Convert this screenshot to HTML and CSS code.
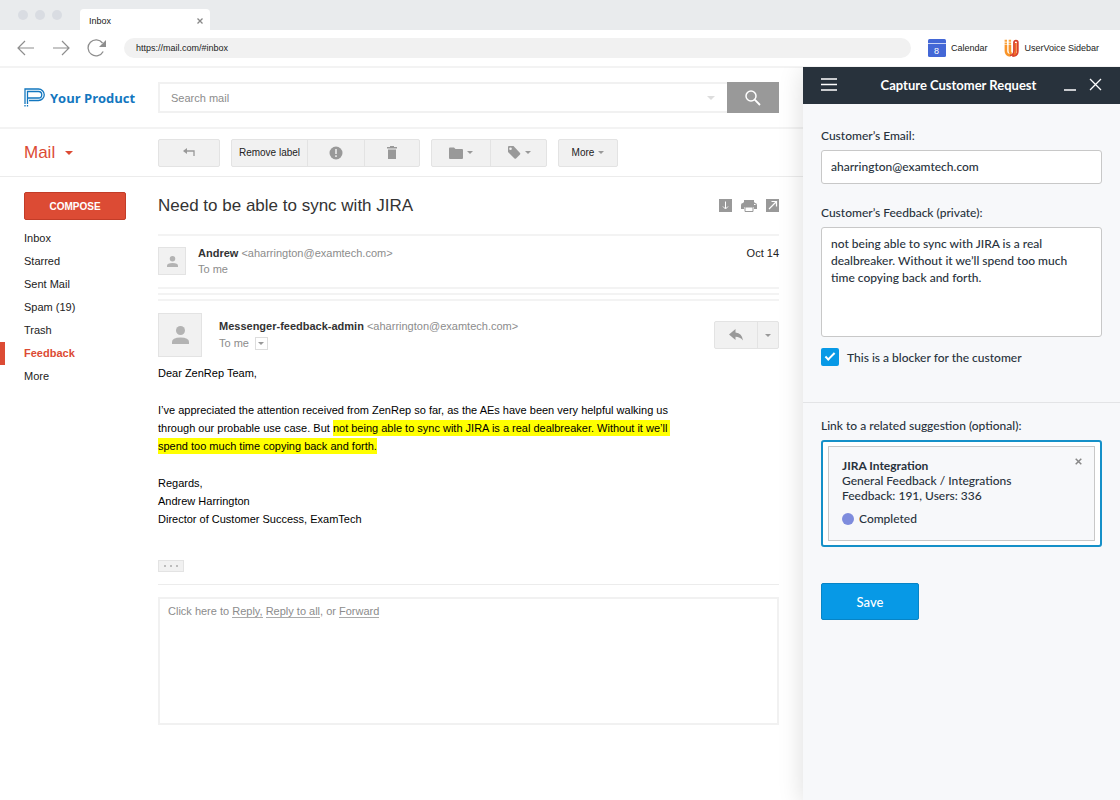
FILE: index.html
```html
<!DOCTYPE html>
<html lang="en">
<head>
    <meta charset="UTF-8">
    <meta name="viewport" content="width=device-width, initial-scale=1.0">
    <title>Inbox</title>
    <link rel="stylesheet" href="styles.css">
</head>
<body>
    <header class="browser">
        <div class="tabs">
            <span class="dot"></span>
            <span class="dot"></span>
            <span class="dot"></span>
            <div class="tab">
                <span>Inbox</span>
                <button class="tab-close" aria-label="Close tab">
                    <svg width="6" height="6" viewBox="0 0 6 6"><path d="M.5.5l5 5M5.5.5l-5 5" stroke="#888" stroke-width="1.3"/></svg>
                </button>
            </div>
        </div>
        <div class="address-bar">
            <button aria-label="Back">
                <svg width="18" height="16" viewBox="0 0 18 16" fill="none" stroke="#8e8e8e" stroke-width="1.2"><path d="M17 8H1M8 1L1 8l7 7"/></svg>
            </button>
            <button aria-label="Forward">
                <svg width="18" height="16" viewBox="0 0 18 16" fill="none" stroke="#8e8e8e" stroke-width="1.2"><path d="M1 8h16M10 1l7 7-7 7"/></svg>
            </button>
            <button aria-label="Reload">
                <svg width="20" height="18" viewBox="0 0 20 18"><path d="M16.2 12.5A8 8 0 1 1 15.5 4" fill="none" stroke="#8e8e8e" stroke-width="1.3"/><path d="M19 1v7h-7z" fill="#8e8e8e"/></svg>
            </button>
            <input type="text" class="url" aria-label="Address" value="https://mail.com/#inbox">
            <a href="#" class="bookmark">
                <svg width="18" height="18" viewBox="0 0 18 18"><rect width="18" height="18" rx="1.5" fill="#4367d6"/><path d="M0 4.5h18" stroke="#c9d4f5"/><text x="8.5" y="14.5" font-size="9" fill="#fff" text-anchor="middle">8</text></svg>
                Calendar
            </a>
            <a href="#" class="bookmark">
                <svg width="15" height="18" viewBox="0 0 15 18" fill="none">
                    <path d="M1.9 6v6q0 4 4.600 4.500" stroke="#f9952a" stroke-width="2.600"/>
                    <path d="M5.900 6v6q0 2 1.500 3" stroke="#f9952a" stroke-width="2.600"/>
                    <path d="M6 16.300c3 0 4-1.800 4-4.300V3.500a1.900 1.900 0 0 1 3.800 0V12c0 3-2 5-5.500 5" stroke="#d9402b" stroke-width="1.800"/>
                    <path d="M11.800 4v8q0 2.500-2 4" stroke="#f26a21" stroke-width="1.800"/>
                    <path d="M.6 1.800h2.400M4.700 1.800h2.400M.6 4.500h2.400M4.700 4.500h2.400" stroke="#f9a13a" stroke-width="1.900"/>
                </svg>
                UserVoice Sidebar
            </a>
        </div>
    </header>

    <div class="app">
        <div class="mail">
            <div class="mail-header">
                <a href="#" class="brand">
                    <svg width="21" height="19" viewBox="0 0 21 19" fill="none" stroke="#1377bf" stroke-width="1.3"><path d="M1 16V1h13.500a5.500 5.500 0 0 1 0 11.500H5M3.500 16V3.500h11a3.200 3.200 0 0 1 0 6.500H3.500M3.500 10v2.500M1 17v1.500M3.500 17v1.500"/></svg>
                    Your Product
                </a>
                <form class="search">
                    <div class="search-box">
                        <input type="text" placeholder="Search mail" aria-label="Search mail">
                        <span class="caret light"></span>
                    </div>
                    <button type="button" aria-label="Search">
                        <svg width="16" height="16" viewBox="0 0 16 16" fill="none" stroke="#fff"><circle cx="6" cy="6" r="5" stroke-width="1.5"/><path d="M9.700 9.700L15 15" stroke-width="1.8"/></svg>
                    </button>
                </form>
            </div>

            <div class="toolbar">
                <button class="mail-menu">Mail <span class="caret red"></span></button>
                <div class="tools">
                    <div class="group">
                        <button class="back" aria-label="Back to inbox">
                            <svg width="12" height="9" viewBox="0 0 12 9"><path d="M2 3h9v5" fill="none" stroke="#999" stroke-width="1.3"/><path d="M0 3l4-3v6z" fill="#999"/></svg>
                        </button>
                    </div>
                    <div class="group">
                        <button class="remove">Remove label</button>
                        <button class="spam" aria-label="Report spam">
                            <svg width="14" height="14" viewBox="0 0 14 14"><circle cx="7" cy="7" r="6.5" fill="#999"/><path d="M7 3v5M7 9.300v1.700" stroke="#f1f1f1" stroke-width="1.5"/></svg>
                        </button>
                        <button class="trash" aria-label="Delete">
                            <svg width="10" height="13" viewBox="0 0 10 13" fill="#999"><path d="M0 1h3V0h4v1h3v1.500H0zM1 3.500h8V13H1z"/></svg>
                        </button>
                    </div>
                    <div class="group">
                        <button class="folder" aria-label="Move to">
                            <svg width="14" height="12" viewBox="0 0 14 12" fill="#999"><path d="M0 1.500Q0 .5 1 .5h4L6.500 2H13q1 0 1 1v8q0 1-1 1H1q-1 0-1-1z"/></svg>
                            <span class="caret"></span>
                        </button>
                        <button class="label" aria-label="Labels">
                            <svg width="14" height="13" viewBox="0 0 14 13"><path d="M1 1q0-1 1-1h4.500L13 7q.7.8 0 1.500L9 12.500q-.7.7-1.500 0L1 6z" fill="#999"/><circle cx="3.500" cy="2.700" r="1.300" fill="#f1f1f1"/></svg>
                            <span class="caret"></span>
                        </button>
                    </div>
                    <div class="group">
                        <button class="more">More <span class="caret"></span></button>
                    </div>
                </div>
            </div>

            <div class="mail-body">
                <nav class="folders">
                    <button class="compose">COMPOSE</button>
                    <ul>
                        <li><a href="#">Inbox</a></li>
                        <li><a href="#">Starred</a></li>
                        <li><a href="#">Sent Mail</a></li>
                        <li><a href="#">Spam (19)</a></li>
                        <li><a href="#">Trash</a></li>
                        <li class="active"><a href="#">Feedback</a></li>
                        <li><a href="#">More</a></li>
                    </ul>
                </nav>

                <main class="thread">
                    <div class="subject">
                        <h1>Need to be able to sync with JIRA</h1>
                        <div class="actions">
                            <button aria-label="Download">
                                <svg width="13" height="13" viewBox="0 0 13 13"><path d="M0 0h13v13H0z" fill="#999"/><path d="M6.500 2.500v7M4 7.500l2.500 2.500L9 7.500" fill="none" stroke="#fff"/></svg>
                            </button>
                            <button aria-label="Print">
                                <svg width="16" height="13" viewBox="0 0 16 13"><path d="M3 1h10v2H3zM2 4h12q2 0 2 2v4h-3V8H3v2H0V6q0-2 2-2z" fill="#999"/><path d="M2.500 3h11v5h-11z" fill="#999"/><path d="M4 8h8v4.500H4z" fill="#fff" stroke="#999"/><path d="M13 5.500h1.500" stroke="#fff"/></svg>
                            </button>
                            <button aria-label="Open in new window">
                                <svg width="13" height="13" viewBox="0 0 13 13"><path d="M0 0h13v13H0z" fill="#999"/><path d="M3 10l7-7M5.500 2.500h5v5" fill="none" stroke="#fff" stroke-width="1.2"/></svg>
                            </button>
                        </div>
                    </div>

                    <div class="message">
                        <div class="avatar small">
                            <svg width="11" height="11" viewBox="0 0 16 16" fill="#b3b3b3"><circle cx="8" cy="4" r="4"/><path d="M0 16v-2q0-4 8-4t8 4v2z"/></svg>
                        </div>
                        <div class="from">
                            <div><b>Andrew</b> &lt;aharrington@examtech.com&gt;</div>
                            <div>To me</div>
                        </div>
                        <time>Oct 14</time>
                    </div>
                    <div class="collapsed"></div>
                    <div class="collapsed"></div>

                    <div class="message open">
                        <div class="avatar">
                            <svg width="17" height="18" viewBox="0 0 17 18" fill="#b3b3b3"><circle cx="8.500" cy="4.500" r="4.500"/><path d="M0 18v-2q0-4.500 8.500-4.500T17 16v2z"/></svg>
                        </div>
                        <div class="from">
                            <div><b>Messenger-feedback-admin</b> &lt;aharrington@examtech.com&gt;</div>
                            <div class="to">To me <button class="details" aria-label="Show details"><span class="caret"></span></button></div>
                        </div>
                        <div class="group">
                            <button class="reply" aria-label="Reply">
                                <svg width="14" height="12" viewBox="0 0 14 12"><path d="M0 5.500L6.500 0v3.500Q13 4 14 11.500 11 7.800 6.500 7.800V11z" fill="#999"/></svg>
                            </button>
                            <button class="reply-more" aria-label="More reply options"><span class="caret"></span></button>
                        </div>
                    </div>

                    <div class="text">
                        <p>Dear ZenRep Team,</p>
                        <p>I’ve appreciated the attention received from ZenRep so far, as the AEs have been very helpful walking us<br>
                        through our probable use case. But <mark>not being able to sync with JIRA is a real dealbreaker. Without it we’ll&nbsp;<br>
                        spend too much time copying back and forth.</mark></p>
                        <p>Regards,<br>Andrew Harrington<br>Director of Customer Success, ExamTech</p>
                    </div>
                    <button class="trimmed" aria-label="Show trimmed content">
                        <svg width="14" height="2" viewBox="0 0 14 2" fill="#aaa"><circle cx="1" cy="1" r="1"/><circle cx="7" cy="1" r="1"/><circle cx="13" cy="1" r="1"/></svg>
                    </button>

                    <div class="reply-area">
                        <div class="reply-box">Click here to <a href="#">Reply,</a> <a href="#">Reply to all</a>, or <a href="#">Forward</a></div>
                    </div>
                </main>
            </div>
        </div>

        <aside class="sidebar">
            <div class="sidebar-header">
                <button aria-label="Menu">
                    <svg width="16" height="13" viewBox="0 0 16 13" stroke="#fff" stroke-width="1.5"><path d="M0 1h16M0 6.500h16M0 12h16"/></svg>
                </button>
                <h2>Capture Customer Request</h2>
                <button aria-label="Minimize">
                    <svg width="12" height="12" viewBox="0 0 12 12"><path d="M0 11h12" stroke="#fff" stroke-width="1.5"/></svg>
                </button>
                <button aria-label="Close">
                    <svg width="13" height="13" viewBox="0 0 13 13" stroke="#fff" stroke-width="1.3"><path d="M1 1l11 11M12 1L1 12"/></svg>
                </button>
            </div>
            <form class="request">
                <div class="field">
                    <label for="email">Customer’s Email:</label>
                    <input type="text" id="email" value="aharrington@examtech.com">
                </div>
                <div class="field">
                    <label for="feedback">Customer’s Feedback (private):</label>
                    <textarea id="feedback">not being able to sync with JIRA is a real dealbreaker. Without it we’ll spend too much time copying back and forth.</textarea>
                </div>
                <div class="check">
                    <input type="checkbox" id="blocker" checked>
                    <label for="blocker">This is a blocker for the customer</label>
                </div>
            </form>
            <div class="related">
                <div class="title">Link to a related suggestion (optional):</div>
                <div class="suggestion-box">
                    <div class="suggestion">
                        <div class="info">
                            <b>JIRA Integration</b>
                            <div>General Feedback / Integrations</div>
                            <div>Feedback: 191, Users: 336</div>
                            <div class="status"><span class="status-dot"></span>Completed</div>
                        </div>
                        <button class="remove-link" aria-label="Remove suggestion">
                            <svg width="7" height="7" viewBox="0 0 7 7"><path d="M.7.7l5.600 5.600M6.300.7L.7 6.300" stroke="#888" stroke-width="1.5"/></svg>
                        </button>
                    </div>
                </div>
                <button class="save">Save</button>
            </div>
        </aside>
    </div>
</body>
</html>
```
FILE: styles.css
```css
* {
    box-sizing: border-box;
}
body {
    margin: 0;
    min-height: 100vh;
    display: flex;
    flex-direction: column;
    font-family: "Liberation Sans", Arial, sans-serif;
    font-size: 11px;
    color: #222;
    background: #fff;
}
button {
    padding: 0;
    border: none;
    background: none;
    font: inherit;
    color: inherit;
    cursor: pointer;
    display: flex;
    align-items: center;
    justify-content: center;
}
input, textarea {
    font: inherit;
    color: inherit;
    outline: none;
}
a {
    color: inherit;
    text-decoration: none;
}
svg {
    display: block;
    flex-shrink: 0;
}
h1, h2, p, ul {
    margin: 0;
    padding: 0;
    font-weight: normal;
}

/* Browser */
.browser {
    font-size: 9px;
}
.tabs {
    height: 30px;
    padding-left: 18px;
    display: flex;
    align-items: center;
    gap: 7px;
    background: #e9ebed;
}
.dot {
    width: 10px;
    height: 10px;
    border-radius: 50%;
    background: #d9dce2;
}
.tab {
    align-self: flex-end;
    width: 130px;
    height: 21px;
    margin-left: 11px;
    padding: 2px 7px 0 9px;
    display: flex;
    align-items: center;
    justify-content: space-between;
    background: #fff;
    border-radius: 4px 4px 0 0;
}
.address-bar {
    height: 38px;
    padding: 0 21px 0 17px;
    display: flex;
    align-items: center;
    gap: 17px;
    border-bottom: 2px solid #f3f3f3;
}
.url {
    flex: 1;
    min-width: 0;
    height: 20px;
    padding: 0 12px;
    border: none;
    border-radius: 10px;
    background: #f1f1f1;
}
.bookmark {
    display: flex;
    align-items: center;
    gap: 5px;
}

.app {
    flex: 1;
    display: flex;
}
.caret {
    border: 4px solid transparent;
    border-top-color: #999;
    border-bottom: 0;
}
.caret.light {
    border-top-color: #ddd;
}
.caret.red {
    border-top-color: #dc4b34;
}

/* Mail */
.mail {
    flex: 1;
    min-width: 0;
}
.mail-header, .toolbar {
    display: grid;
    grid-template-columns: 134px 1fr;
    align-items: center;
    padding: 0 24px;
}
.mail-header {
    height: 61px;
    border-bottom: 2px solid #f3f3f3;
}
.brand {
    display: flex;
    align-items: center;
    gap: 5px;
    font: bold 13px "Open Sans", sans-serif;
    color: #1377bf;
    white-space: nowrap;
}
.search {
    display: flex;
    height: 31px;
}
.search-box {
    flex: 1;
    display: flex;
    align-items: center;
    padding-right: 12px;
    border: 2px solid #f1f1f1;
    border-right: none;
}
.search input {
    flex: 1;
    min-width: 0;
    padding: 0 11px;
    border: none;
}
.search input::placeholder {
    color: #8c8c8c;
}
.search button {
    width: 52px;
    background: #999;
}
.toolbar {
    height: 48px;
    border-bottom: 1px solid #ececec;
}
.mail-menu {
    justify-content: flex-start;
    gap: 10px;
    font-size: 17px;
    color: #dc4b34;
}
.tools {
    display: flex;
    gap: 11px;
    font-size: 10px;
}
.group {
    display: flex;
    height: 28px;
    border: 1px solid #e3e3e3;
    border-radius: 2px;
    background: #f1f1f1;
}
.group button {
    gap: 4px;
}
.group button + button {
    border-left: 1px solid #e3e3e3;
}
.group .caret, .details .caret {
    border-width: 3px 3px 0;
}
.back { width: 60px; }
.remove { width: 75px; }
.spam { width: 57px; }
.trash { width: 55px; }
.folder { width: 58px; }
.label { width: 56px; }
.more { width: 58px; }

.mail-body {
    display: grid;
    grid-template-columns: 158px 1fr;
    padding-right: 24px;
}
.folders {
    padding-top: 15px;
}
.compose {
    width: 102px;
    height: 28px;
    margin-left: 24px;
    border: 1px solid #c23c28;
    border-radius: 2px;
    background: #dc4b34;
    color: #fff;
    font-weight: bold;
    font-size: 10px;
}
.folders ul {
    margin-top: 7px;
    list-style: none;
    line-height: 23px;
}
.folders li {
    padding-left: 24px;
}
.folders .active {
    padding-left: 19px;
    border-left: 5px solid #dc4b34;
    color: #dc4b34;
    font-weight: bold;
}
.subject {
    height: 59px;
    display: flex;
    align-items: center;
    justify-content: space-between;
    border-bottom: 2px solid #f3f3f3;
}
.subject h1 {
    font-size: 17px;
    color: #333;
}
.actions {
    display: flex;
    gap: 9px;
}
.message {
    display: flex;
    height: 53px;
    padding-top: 11px;
    gap: 12px;
    border-bottom: 2px solid #f3f3f3;
}
.avatar {
    width: 44px;
    height: 44px;
    display: flex;
    align-items: center;
    justify-content: center;
    border: 1px solid #e3e3e3;
    background: #f1f1f1;
}
.avatar.small {
    width: 28px;
    height: 28px;
}
.from {
    flex: 1;
    line-height: 16px;
    margin-top: -2px;
    color: #8c8c8c;
}
.from b {
    color: #333;
}
.message time {
    line-height: 12px;
}
.collapsed {
    height: 6px;
    border-bottom: 2px solid #f3f3f3;
}
.message.open {
    height: auto;
    padding-top: 12px;
    gap: 17px;
    border: none;
}
.message.open .from {
    margin-top: 5px;
    line-height: 17px;
}
.message.open .group {
    margin-top: 8px;
}
.to {
    display: flex;
    align-items: center;
    gap: 6px;
}
.details {
    width: 13px;
    height: 13px;
    border: 1px solid #ddd;
}
.reply { width: 42px; }
.reply-more { width: 21px; }

.text {
    margin-top: 7px;
    line-height: 18px;
    color: #000;
}
.text p + p {
    margin-top: 19px;
}
mark {
    padding: 2px 0;
    background: #ff0;
    color: inherit;
}
.trimmed {
    width: 26px;
    height: 12px;
    margin-top: 32px;
    border: 1px solid #e3e3e3;
    background: #f1f1f1;
}
.reply-area {
    margin-top: 12px;
    padding-top: 12px;
    border-top: 1px solid #ececec;
}
.reply-box {
    min-height: 128px;
    padding: 6px 8px;
    border: 2px solid #f1f1f1;
    color: #8c8c8c;
}
.reply-box a {
    border-bottom: 1px solid #aaa;
}

/* Sidebar */
.sidebar {
    width: 317px;
    margin-top: -1px;
    background: #f7f8fa;
    box-shadow: 0 4px 24px rgba(0, 0, 0, 0.14);
    clip-path: inset(0 0 0 -40px);
    font-family: Lato, sans-serif;
    font-size: 12px;
    font-weight: 500;
    color: #28323c;
}
.sidebar-header {
    height: 37px;
    padding: 0 18px 2px;
    display: flex;
    align-items: center;
    gap: 13px;
    background: #28323c;
    color: #fff;
}
.sidebar-header h2 {
    flex: 1;
    padding-left: 16px;
    text-align: center;
    font-size: 13px;
    font-weight: bold;
}
.request {
    padding: 23px 18px 36px;
    border-bottom: 1px solid #e3e4e6;
}
.field {
    display: flex;
    flex-direction: column;
    gap: 5px;
    line-height: 18px;
    margin-bottom: 20px;
}
.field input, .field textarea {
    padding: 0 9px 2px;
    border: 1px solid #c8c8c8;
    border-radius: 3px;
    background: #fff;
}
.field input {
    height: 34px;
}
.field textarea {
    height: 110px;
    padding: 7px 9px;
    line-height: 17px;
    resize: none;
}
.field + .field {
    margin-bottom: 11px;
}
.check {
    display: flex;
    align-items: center;
    gap: 8px;
}
.check input {
    appearance: none;
    width: 18px;
    height: 18px;
    margin: 0;
    border-radius: 2px;
    background: #0799e6;
    display: grid;
    place-items: center;
}
.check input:checked::before {
    content: "";
    width: 8px;
    height: 3px;
    margin-bottom: 3px;
    border: solid #fff;
    border-width: 0 0 2px 2px;
    transform: rotate(-45deg);
}
.related {
    padding: 14px 18px;
}
.title {
    line-height: 18px;
    margin-bottom: 5px;
}
.suggestion-box {
    padding: 4px 5px;
    border: 2px solid #1590c8;
    border-radius: 3px;
    background: #fff;
}
.suggestion {
    display: flex;
    justify-content: space-between;
    align-items: flex-start;
    height: 95px;
    padding: 11px 12px 11px 13px;
    border: 1px solid #c8c8c8;
    background: #f7f8fa;
    line-height: 15px;
}
.status {
    display: flex;
    align-items: center;
    gap: 5px;
    margin-top: 8px;
}
.status-dot {
    width: 12px;
    height: 12px;
    border-radius: 50%;
    background: #7e8cdd;
}
.save {
    width: 98px;
    height: 37px;
    margin-top: 36px;
    border: 1px solid #0784c6;
    border-radius: 2px;
    background: #0799e6;
    color: #fff;
    font-size: 13px;
}
```
